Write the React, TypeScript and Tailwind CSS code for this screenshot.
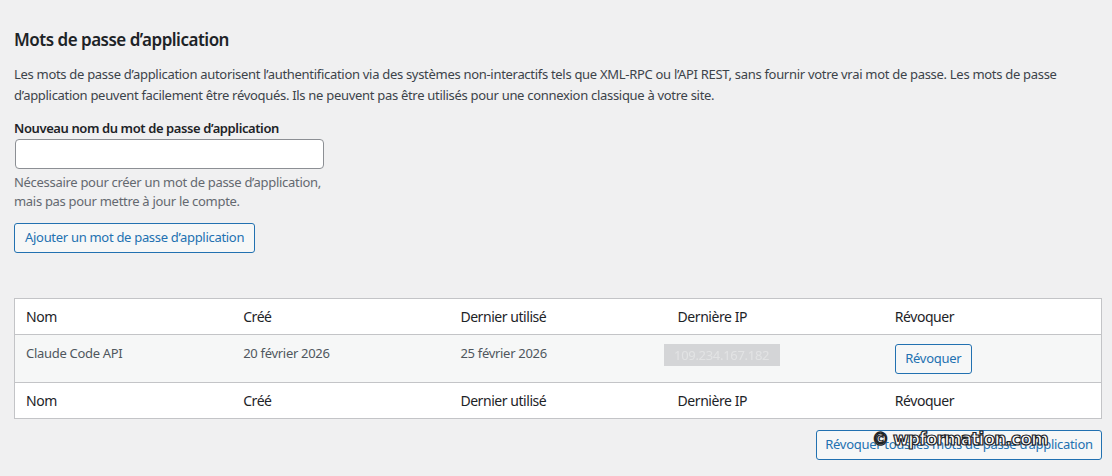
import React from "react";

const rows = [
  { name: "Claude Code API", created: "20 février 2026", used: "25 février 2026", ip: "109.234.167.182" },
];

const cols = ["Nom", "Créé", "Dernier utilisé", "Dernière IP", "Révoquer"];

function HeadRow({ top }: { top?: boolean }) {
  return (
    <div
      className={
        "grid grid-cols-5 bg-white h-[36px] items-center text-[14px] tracking-[-0.45px] text-[#1d2327] " +
        (top ? "border-b border-[#c3c4c7]" : "border-t border-[#c3c4c7]")
      }
    >
      {cols.map((c) => (
        <div key={c} className="pl-[11px]">
          {c}
        </div>
      ))}
    </div>
  );
}

export default function App() {
  return (
    <div
      className="min-h-screen bg-[#f0f0f1] pl-[14px] pr-[10px] pb-4 text-[#3c434a] tracking-[-0.3px]"
      style={{ fontFamily: '"Noto Sans", "Open Sans", sans-serif' }}
    >
      {/* titre */}
      <h2 className="pt-[28px] text-[17px] leading-[24px] font-semibold tracking-[-0.5px] text-[#1d2327]">
        Mots de passe d’application
      </h2>

      <p className="mt-[12px] text-[13px] leading-[21px] whitespace-nowrap">
        Les mots de passe d’application autorisent l’authentification via des systèmes non-interactifs tels que XML-RPC ou l’API REST, sans fournir votre vrai mot de passe. Les mots de passe
        <br />
        d’application peuvent facilement être révoqués. Ils ne peuvent pas être utilisés pour une connexion classique à votre site.
      </p>

      {/* formulaire */}
      <label className="block mt-[12px] text-[13px] leading-[20px] font-semibold tracking-[-0.4px] text-[#1d2327]">
        Nouveau nom du mot de passe d’application
      </label>
      <input
        type="text"
        className="block mt-[1px] ml-px w-[309px] h-[30px] rounded-[4px] border border-[#8c8f94] bg-white px-2 text-[13px] outline-none"
      />
      <p className="mt-[4px] text-[13px] leading-[19px] text-[#646970]">
        Nécessaire pour créer un mot de passe d’application,
        <br />
        mais pas pour mettre à jour le compte.
      </p>
      <button className="mt-[12px] h-[30px] px-[10px] rounded-[3px] border border-[#2271b1] bg-[#f6f7f7] text-[13px] text-[#2271b1]">
        Ajouter un mot de passe d’application
      </button>

      {/* tableau */}
      <div className="mt-[45px] border border-[#c3c4c7] bg-white">
        <HeadRow top />
        {rows.map((r) => (
          <div key={r.name} className="grid grid-cols-5 bg-[#f6f7f7] h-[47px] text-[13px] text-[#50575e]">
            <div className="pl-[11px] pt-[9px]">{r.name}</div>
            <div className="pl-[11px] pt-[9px]">{r.created}</div>
            <div className="pl-[11px] pt-[9px]">{r.used}</div>
            <div className="pt-[9px] -ml-[3px]">
              <span className="inline-block h-[22px] w-[116px] bg-[#d4d5d7] text-center leading-[22px] text-[#e2e3e4] blur-[0.6px]">
                {r.ip}
              </span>
            </div>
            <div className="pl-[11px] pt-[9px]">
              <button className="h-[30px] w-[77px] rounded-[3px] border border-[#2271b1] bg-[#f6f7f7] text-[13px] text-[#2271b1]">
                Révoquer
              </button>
            </div>
          </div>
        ))}
        <HeadRow />
      </div>

      <div className="flex justify-end mt-[11px]">
        <div className="relative">
          <button className="h-[30px] w-[286px] rounded-[3px] border border-[#2271b1] bg-[#f6f7f7] text-[13px] text-[#2271b1] whitespace-nowrap">
            Révoquer tous les mots de passe d’application
          </button>
          {/* filigrane */}
          <span
            className="absolute left-[56px] top-[-3px] text-[17px] font-black tracking-[-0.9px] text-white whitespace-nowrap pointer-events-none"
            style={{ WebkitTextStroke: "1.2px #1d2327", fontFamily: '"DejaVu Sans", sans-serif' }}
          >
            © wpformation.com
          </span>
        </div>
      </div>
    </div>
  );
}
